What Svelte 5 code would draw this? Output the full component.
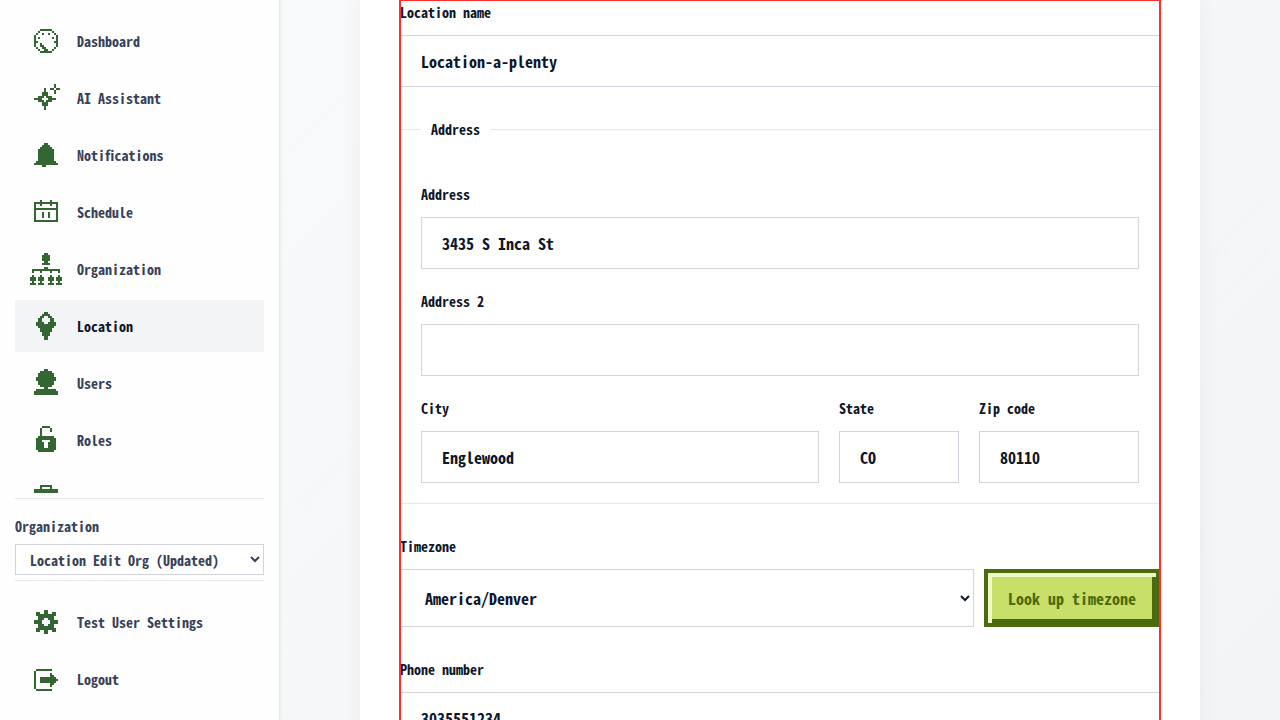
<script lang="ts">
  interface NavItem {
    label: string
    icon: string
    active?: boolean
    iconOnly?: boolean
  }

  interface Icon {
    x: number
    y: number
    rows: string[]
  }

  // Pixel icons on a 16x16 grid, x and y give the first column and row
  const icons: Record<string, Icon> = {
    gauge: {
      x: 2,
      y: 2,
      rows: [
        '...######...',
        '..#......#..',
        '.#..#..#..#.',
        '#..........#',
        '#.#......#.#',
        '#..........#',
        '##........##',
        '#..#.......#',
        '#..##......#',
        '.#..##....#.',
        '..#..##..#..',
        '...######...',
      ],
    },
    sparkle: {
      x: 2,
      y: 1,
      rows: [
        '..........#..',
        '..........#..',
        '.....#..##.##',
        '.....#....#..',
        '....###...#..',
        '....###......',
        '..###.###....',
        '####...####..',
        '..###.###....',
        '....###......',
        '....###......',
        '.....#.......',
        '.....#.......',
      ],
    },
    bell: {
      x: 2,
      y: 2,
      rows: [
        '.....##.....',
        '....####....',
        '...######...',
        '..########..',
        '..########..',
        '..########..',
        '..########..',
        '..########..',
        '..########..',
        '.##########.',
        '############',
        '....##......',
      ],
    },
    calendar: {
      x: 2,
      y: 2,
      rows: [
        '...#....#...',
        '############',
        '#..#....#..#',
        '#..........#',
        '############',
        '#..........#',
        '#...#..#...#',
        '#...#..#...#',
        '#...#..#...#',
        '#..........#',
        '############',
      ],
    },
    tree: {
      x: 0,
      y: 0,
      rows: [
        '.......##.......',
        '......####......',
        '......####......',
        '......####......',
        '.......##.......',
        '......####......',
        '................',
        '.......##.......',
        '.##############.',
        '.#...#....#...#.',
        '................',
        '.#...#....#...#.',
        '###.###..###.###',
        '###.###..###.###',
        '.#...#....#...#.',
        '###.###..###.###',
      ],
    },
    pin: {
      x: 3,
      y: 1,
      rows: [
        '....##....',
        '...####...',
        '..##..##..',
        '.##....##.',
        '.##....##.',
        '####..####',
        '##########',
        '.########.',
        '..######..',
        '..######..',
        '...####...',
        '...####...',
        '....##....',
        '....##....',
      ],
    },
    user: {
      x: 2,
      y: 1,
      rows: [
        '.....##.....',
        '...######...',
        '..########..',
        '..########..',
        '.##########.',
        '.##########.',
        '..########..',
        '..########..',
        '...######...',
        '.....##.....',
        '.##########.',
        '############',
        '############',
      ],
    },
    lock: {
      x: 3,
      y: 1,
      rows: [
        '...####...',
        '..#....#..',
        '..#....#..',
        '..#.......',
        '..#.......',
        '.########.',
        '##########',
        '###....###',
        '####..####',
        '####..####',
        '####..####',
        '##########',
        '.########.',
      ],
    },
    briefcase: {
      x: 2,
      y: 2,
      rows: [
        '...######...',
        '...#....#...',
        '############',
        '############',
        '############',
        '#####..#####',
        '............',
        '#####..#####',
        '############',
        '############',
      ],
    },
    gear: {
      x: 2,
      y: 2,
      rows: [
        '.....##.....',
        '.##..##..##.',
        '.##########.',
        '..########..',
        '..###..###..',
        '####....####',
        '####....####',
        '..###..###..',
        '..########..',
        '.##########.',
        '.##..##..##.',
        '.....##.....',
      ],
    },
    exit: {
      x: 2,
      y: 3,
      rows: [
        '.########...',
        '#...........',
        '#.......#...',
        '#.......##..',
        '#..########.',
        '#..#########',
        '#..########.',
        '#.......##..',
        '#.......#...',
        '#...........',
        '.########...',
      ],
    },
  }

  const mainNav: NavItem[] = [
    { label: 'Dashboard', icon: 'gauge' },
    { label: 'AI Assistant', icon: 'sparkle' },
    { label: 'Notifications', icon: 'bell' },
    { label: 'Schedule', icon: 'calendar' },
    { label: 'Organization', icon: 'tree' },
    { label: 'Location', icon: 'pin', active: true },
    { label: 'Users', icon: 'user' },
    { label: 'Roles', icon: 'lock' },
    { label: 'Jobs', icon: 'briefcase', iconOnly: true },
  ]

  const userNav: NavItem[] = [
    { label: 'Test User Settings', icon: 'gear' },
    { label: 'Logout', icon: 'exit' },
  ]

  let location = $state({
    name: 'Location-a-plenty',
    address: '3435 S Inca St',
    address2: '',
    city: 'Englewood',
    state: 'CO',
    zip: '80110',
    timezone: 'America/Denver',
    phone: '3035551234',
  })

  function iconPath({ x, y, rows }: Icon) {
    let d = ''
    rows.forEach((row, r) => {
      for (const run of row.matchAll(/#+/g)) {
        d += `M${x + run.index} ${y + r}h${run[0].length}v1h-${run[0].length}z`
      }
    })
    return d
  }
</script>

{#snippet navLink(item: NavItem)}
  <a
    class="nav-link"
    class:active={item.active}
    href="#{item.icon}"
    aria-label={item.label}
    aria-current={item.active ? 'page' : undefined}
  >
    <svg class="icon" viewBox="0 0 16 16" aria-hidden="true">
      <path d={iconPath(icons[item.icon])} />
    </svg>
    {#if !item.iconOnly}
      <span>{item.label}</span>
    {/if}
  </a>
{/snippet}

<div class="layout">
  <aside class="sidebar">
    <nav class="nav nav-main" aria-label="Main">
      {#each mainNav as item}
        {@render navLink(item)}
      {/each}
    </nav>

    <div class="org">
      <label for="org">Organization</label>
      <select id="org">
        <option>Location Edit Org (Updated)</option>
      </select>
    </div>

    <nav class="nav nav-user" aria-label="Account">
      {#each userNav as item}
        {@render navLink(item)}
      {/each}
    </nav>
  </aside>

  <main>
    <div class="card">
      <form>
        <div class="field">
          <label for="name">Location name</label>
          <input id="name" type="text" bind:value={location.name} />
        </div>

        <fieldset>
          <legend>Address</legend>
          <div class="address">
            <div class="field">
              <label for="address">Address</label>
              <input id="address" type="text" bind:value={location.address} />
            </div>
            <div class="field">
              <label for="address2">Address 2</label>
              <input id="address2" type="text" bind:value={location.address2} />
            </div>
            <div class="city-row">
              <div class="field">
                <label for="city">City</label>
                <input id="city" type="text" bind:value={location.city} />
              </div>
              <div class="field">
                <label for="state">State</label>
                <input id="state" type="text" bind:value={location.state} />
              </div>
              <div class="field">
                <label for="zip">Zip code</label>
                <input id="zip" type="text" bind:value={location.zip} />
              </div>
            </div>
          </div>
        </fieldset>

        <div class="field">
          <label for="timezone">Timezone</label>
          <div class="timezone-row">
            <select id="timezone" bind:value={location.timezone}>
              <option>America/Denver</option>
            </select>
            <button type="button">Look up timezone</button>
          </div>
        </div>

        <div class="field">
          <label for="phone">Phone number</label>
          <input id="phone" type="tel" bind:value={location.phone} />
        </div>
      </form>
    </div>
  </main>
</div>

<style>
  :global(body) {
    margin: 0;
    overflow: hidden;
  }

  .layout {
    display: flex;
    height: 100vh;
    overflow: hidden;
    background: linear-gradient(135deg, #f8fafc, #f3f4f6);
    color: #0f172a;
    font-family: 'Noto Sans CJK JP', 'Liberation Mono', monospace;
    font-feature-settings: 'hwid';
    font-size: 14px;
    font-weight: 700;
  }

  .layout * {
    box-sizing: border-box;
  }

  .sidebar {
    display: flex;
    flex-direction: column;
    flex-shrink: 0;
    width: 280px;
    padding: 15px;
    background: #fefefe;
    border-right: 1px solid #e5e7eb;
    box-shadow: 0 0 4px rgba(0, 0, 0, 0.08);
    color: #374158;
  }

  .nav {
    display: flex;
    flex-direction: column;
    gap: 5px;
  }

  .nav-main {
    flex: 1;
    min-height: 0;
    margin-bottom: 5px;
    overflow: hidden;
  }

  .nav-user {
    padding-top: 15px;
    border-top: 1px solid #e5e7eb;
  }

  .nav-link {
    display: flex;
    align-items: center;
    flex-shrink: 0;
    gap: 15px;
    height: 52px;
    padding: 0 15px;
    color: inherit;
    text-decoration: none;
  }

  .nav-link.active {
    background: #f3f4f6;
    color: #0f172a;
  }

  .icon {
    width: 32px;
    height: 32px;
    fill: #336633;
    shape-rendering: crispEdges;
  }

  .org {
    display: flex;
    flex-direction: column;
    gap: 5px;
    padding: 15px 0 5px;
    border-top: 1px solid #e5e7eb;
  }

  .org label {
    line-height: 25px;
  }

  .org select {
    height: 31px;
    padding: 0 10px;
    font-size: 14px;
  }

  main {
    flex: 1;
    min-width: 0;
    padding: 0 80px;
  }

  .card {
    min-height: 100%;
    padding: 0 40px;
    background: #fff;
    box-shadow: 0 0 20px rgba(0, 0, 0, 0.05);
  }

  form {
    display: flex;
    flex-direction: column;
    gap: 30px;
    padding-bottom: 30px;
    outline: 2px solid #ff2f2f;
    outline-offset: -1px;
  }

  .field {
    display: flex;
    flex-direction: column;
    gap: 10px;
    min-width: 0;
  }

  .field label,
  legend {
    line-height: 25px;
  }

  fieldset {
    min-width: 0;
    margin: 0;
    padding: 40px 20px 20px;
    border: 1px solid #e5e7eb;
  }

  legend {
    padding: 0 10px;
  }

  .address {
    display: flex;
    flex-direction: column;
    gap: 20px;
  }

  .city-row {
    display: grid;
    grid-template-columns: 1fr 120px 160px;
    gap: 20px;
  }

  input,
  select,
  button {
    margin: 0;
    border-radius: 0;
    font: inherit;
    font-feature-settings: inherit;
    font-size: 16px;
  }

  input,
  select {
    width: 100%;
    border: 1px solid #d1d5db;
    background: #fff;
    color: inherit;
  }

  input {
    height: 52px;
    padding: 0 20px;
  }

  .timezone-row {
    display: flex;
    gap: 10px;
    height: 58px;
  }

  .timezone-row select {
    flex: 1;
    min-width: 0;
    padding: 0 20px;
  }

  button {
    padding: 0 20px;
    border: 4px solid #4a6c0f;
    background: #c8df69;
    box-shadow:
      inset 4px 4px #eff9c8,
      inset -4px -4px #4a6c0f;
    color: #4a6c0f;
    white-space: nowrap;
  }
</style>
